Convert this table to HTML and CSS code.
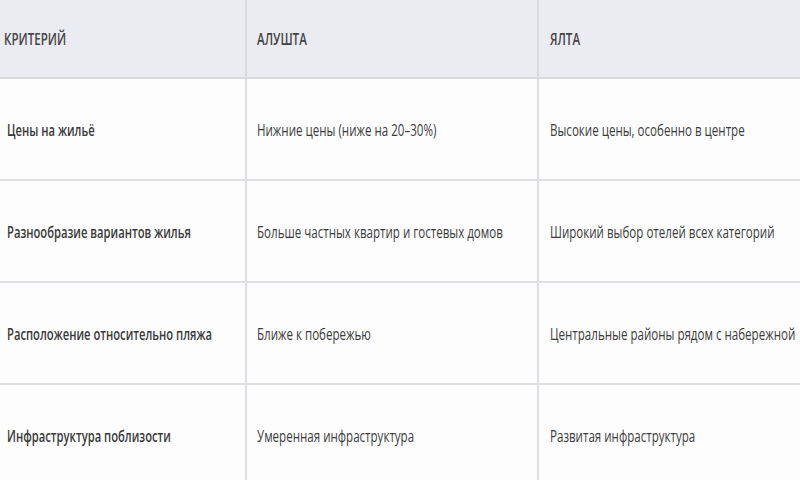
FILE: index.html
```html
<!DOCTYPE html>
<html lang="ru">
<head>
<meta charset="utf-8">
<link rel="stylesheet" href="styles.css">
</head>
<body>
<div class="table">
  <div class="row head">
    <div class="cell c1"><span class="t">КРИТЕРИЙ</span></div>
    <div class="cell c2"><span class="t">АЛУШТА</span></div>
    <div class="cell c3"><span class="t">ЯЛТА</span></div>
  </div>
  <div class="row">
    <div class="cell c1"><span class="t b">Цены на жильё</span></div>
    <div class="cell c2"><span class="t">Нижние цены (ниже на 20–30%)</span></div>
    <div class="cell c3"><span class="t">Высокие цены, особенно в центре</span></div>
  </div>
  <div class="row">
    <div class="cell c1"><span class="t b">Разнообразие вариантов жилья</span></div>
    <div class="cell c2"><span class="t">Больше частных квартир и гостевых домов</span></div>
    <div class="cell c3"><span class="t">Широкий выбор отелей всех категорий</span></div>
  </div>
  <div class="row">
    <div class="cell c1"><span class="t b">Расположение относительно пляжа</span></div>
    <div class="cell c2"><span class="t">Ближе к побережью</span></div>
    <div class="cell c3"><span class="t">Центральные районы рядом с набережной</span></div>
  </div>
  <div class="row last">
    <div class="cell c1"><span class="t b">Инфраструктура поблизости</span></div>
    <div class="cell c2"><span class="t">Умеренная инфраструктура</span></div>
    <div class="cell c3"><span class="t">Развитая инфраструктура</span></div>
  </div>
</div>
</body>
</html>
```
FILE: styles.css
```css
html, body {
  margin: 0;
  padding: 0;
  background: #fdfdfd;
  overflow: hidden;
}
body {
  width: 800px;
  height: 480px;
  font-family: "Open Sans", "Noto Sans", sans-serif;
  font-size: 17px;
  color: #3c3c3c;
}
.table {
  display: flex;
  flex-direction: column;
  width: 800px;
  overflow: hidden;
}
.row {
  display: grid;
  grid-template-columns: 245px 292px 1fr;
  height: 100px;
  border-bottom: 2px solid #dedfe3;
}
.row.head {
  height: 77px;
  background: #ebecf2;
  border-bottom: 2px solid #d9dae0;
}
.cell {
  display: flex;
  align-items: center;
  white-space: nowrap;
  padding-left: 11px;
  min-width: 0;
}
.cell.c1 {
  padding-left: 7px;
}
.head .cell.c1 {
  padding-left: 4px;
}
.cell.c2, .cell.c3 {
  border-left: 2px solid #dedfe3;
}
.cell.c2 { padding-left: 10px; }
.head .cell.c2, .head .cell.c3 {
  border-left-color: #d9dae0;
}
.t {
  display: inline-block;
  transform: scaleX(0.68);
  transform-origin: left center;
}
.head .t {
  font-weight: 600;
  color: #444;
}
.t.b {
  font-weight: 600;
  color: #3a3a3a;
  transform: scaleX(0.66);
}
```
